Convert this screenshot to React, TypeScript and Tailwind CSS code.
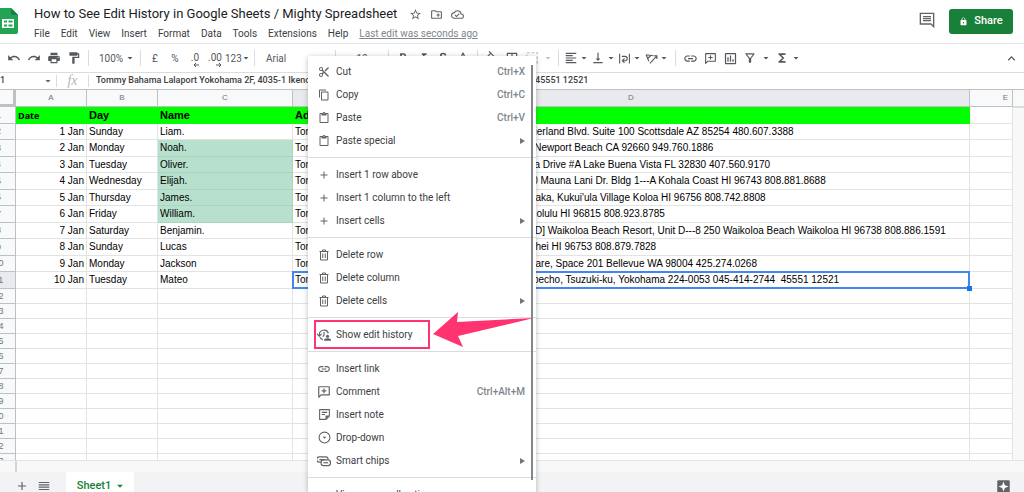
import type { ReactNode } from 'react';
import {
  MdAdd,
  MdArrowDropDown,
  MdContentCopy,
  MdContentCut,
  MdContentPaste,
  MdExpandLess,
  MdFormatAlignLeft,
  MdFormatBold,
  MdFormatColorFill,
  MdFormatColorText,
  MdFormatItalic,
  MdFormatPaint,
  MdFunctions,
  MdLink,
  MdLock,
  MdOutlineBorderAll,
  MdOutlineCloudDone,
  MdOutlineCreateNewFolder,
  MdOutlineFilterAlt,
  MdOutlineInsertChart,
  MdPrint,
  MdRedo,
  MdReorder,
  MdStarBorder,
  MdStrikethroughS,
  MdUndo,
  MdVerticalAlignBottom,
} from 'react-icons/md';

const FORMULA =
  'Tommy Bahama Lalaport Yokohama 2F, 4035-1 Ikenobecho, Tsuzuki-ku, Yokohama 224-0053 045-414-2744  45551 12521';

interface Row {
  date: string;
  day: string;
  name: string;
  address: string;
  shaded?: boolean;
}

const rows: Row[] = [
  { date: '1 Jan', day: 'Sunday', name: 'Liam.', address: 'Tommy Bahama Kierland Commons Store 15205 N. Kierland Blvd. Suite 100 Scottsdale AZ 85254 480.607.3388' },
  { date: '2 Jan', day: 'Monday', name: 'Noah.', address: 'Tommy Bahama Fashion Island 854 Avocado Avenue Newport Beach CA 92660 949.760.1886', shaded: true },
  { date: '3 Jan', day: 'Tuesday', name: 'Oliver.', address: 'Tommy Bahama Disney Springs Mall 1502 Buena Vista Drive #A Lake Buena Vista FL 32830 407.560.9170', shaded: true },
  { date: '4 Jan', day: 'Wednesday', name: 'Elijah.', address: 'Tommy Bahama The Shoppes at Mauna Lani, 68-1330 Mauna Lani Dr. Bldg 1---A Kohala Coast HI 96743 808.881.8688', shaded: true },
  { date: '5 Jan', day: 'Thursday', name: 'James.', address: "Tommy Bahama Kukui'ula Koloa 2829 Ala Kalanikaumaka, Kukui'ula Village Koloa HI 96756 808.742.8808", shaded: true },
  { date: '6 Jan', day: 'Friday', name: 'William.', address: 'Tommy Bahama Waikiki 298 Beach Walk Avenue, Honolulu HI 96815 808.923.8785', shaded: true },
  { date: '7 Jan', day: 'Saturday', name: 'Benjamin.', address: "Tommy Bahama Kings' Shops at Waikoloa, [Building #D] Waikoloa Beach Resort, Unit D---8 250 Waikoloa Beach Waikoloa HI 96738 808.886.1591" },
  { date: '8 Jan', day: 'Sunday', name: 'Lucas', address: 'Tommy Bahama Wailea 3750 Wailea Alanui Drive S Kihei HI 96753 808.879.7828' },
  { date: '9 Jan', day: 'Monday', name: 'Jackson', address: 'Tommy Bahama Bellevue Collection 211 Bellevue Square, Space 201 Bellevue WA 98004 425.274.0268' },
  { date: '10 Jan', day: 'Tuesday', name: 'Mateo', address: FORMULA },
];

const emptyRows = [12, 13, 14, 15, 16, 17, 18, 19, 20, 21, 22, 23];

function CommentPlusIcon({ className = 'size-[14px]' }: { className?: string }) {
  return (
    <svg viewBox="0 0 24 24" fill="none" stroke="currentColor" strokeWidth="2" className={className}>
      <path d="M3 21V3h18v14H7z" strokeLinejoin="round" />
      <path d="M12 6v8M8 10h8" />
    </svg>
  );
}

function HistoryIcon() {
  return (
    <svg viewBox="0 0 24 24" fill="none" stroke="currentColor" strokeWidth="2" className="size-[14px]">
      <path d="M4 12a8 8 0 0 1 15.500-3M5 16a8 8 0 0 0 5 4" />
      <path d="M0 10l4 4 4-4M12 7v5l-2 3" />
      <circle cx="18" cy="14" r="2.600" fill="currentColor" stroke="none" />
      <path d="M12 22v-1.500c0-2 3-3 6-3s6 1 6 3V22z" fill="currentColor" stroke="none" />
    </svg>
  );
}

function NoteIcon() {
  return (
    <svg viewBox="0 0 24 24" fill="none" stroke="currentColor" strokeWidth="2" className="size-[13px]">
      <path d="M3 3h18v12l-6 6H3z" strokeLinejoin="round" />
      <path d="M7 8h10M7 12h6" />
      <path d="M21 14h-7v7z" fill="currentColor" stroke="none" />
    </svg>
  );
}

function DropDownIcon() {
  return (
    <svg viewBox="0 0 24 24" fill="none" stroke="currentColor" strokeWidth="2" className="size-[13px]">
      <circle cx="12" cy="12" r="10" />
      <path d="M8.500 10.500h7L12 14.500z" fill="currentColor" stroke="none" />
    </svg>
  );
}

function ChipsIcon() {
  return (
    <svg viewBox="0 0 24 24" fill="none" stroke="currentColor" strokeWidth="2" className="size-[14px]">
      <path d="M7 14H4a4 4 0 0 1 0-9h11a4 4 0 0 1 4 4M4 9.500h9" />
      <rect x="7" y="10" width="16" height="10" rx="4" />
      <path d="M11 15h8" />
    </svg>
  );
}

function TrashIcon() {
  return (
    <svg viewBox="0 0 24 24" fill="none" stroke="currentColor" strokeWidth="2" className="size-3">
      <path d="M3 5h18M9 4V2h6v2M5 5v17h14V5M9.500 9v9M14.500 9v9" />
    </svg>
  );
}

function WrapIcon() {
  return (
    <svg viewBox="0 0 24 24" fill="none" stroke="currentColor" strokeWidth="2" className="size-[13px]">
      <path d="M3 3v18M21 3v18M7 8h6a4 4 0 0 1 0 8H9M12 12l-4 4 4 4" />
    </svg>
  );
}

function RotateIcon() {
  return (
    <svg viewBox="0 0 24 24" fill="none" stroke="currentColor" strokeWidth="2" className="size-[13px]">
      <path d="M2 5l13 2M2 5l5 12M11 6l-6 6M9 21L21 8M16 7h6v6" />
    </svg>
  );
}

function ExploreIcon() {
  return (
    <svg viewBox="0 0 24 24" className="size-[15px]">
      <path d="M2 4a2 2 0 0 1 2-2h16a2 2 0 0 1 2 2v18H4a2 2 0 0 1-2-2z" fill="#5f6368" />
      <path d="M12 4l2.200 5.800L20 12l-5.800 2.200L12 20l-2.200-5.800L4 12l5.800-2.200z" fill="#fff" />
    </svg>
  );
}

function SheetsLogo() {
  return (
    <svg viewBox="0 0 22 26" className="h-[26px] w-[22px]">
      <path d="M2 0h13l7 7v17a2 2 0 0 1-2 2H2a2 2 0 0 1-2-2V2a2 2 0 0 1 2-2z" fill="#23a455" />
      <path d="M15 0l7 7h-5a2 2 0 0 1-2-2z" fill="#158043" />
      <path d="M6 11h12v9H6zM8 12.500v2h3v-2zM12.500 12.500v2h4v-2zM8 16.500v2h3v-2zM12.500 16.500v2h4v-2z" fill="#fff" fillRule="evenodd" />
    </svg>
  );
}

function Separator() {
  return <div className="mx-1 h-4 w-px shrink-0 bg-[#dadce0]" />;
}

function Tool({ label, children, className = 'w-5' }: { label: string; children?: ReactNode; className?: string }) {
  return (
    <button aria-label={label} className={`flex h-5 shrink-0 items-center justify-center ${className}`}>
      {children}
    </button>
  );
}

function DropTool({ label, children }: { label: string; children: ReactNode }) {
  return (
    <button aria-label={label} className="flex h-5 w-[27px] shrink-0 items-center justify-start pl-px">
      {children}
      <MdArrowDropDown className="size-3" />
    </button>
  );
}

function DecimalTool({ label, digits, arrow }: { label: string; digits: string; arrow: string }) {
  return (
    <Tool label={label}>
      <span className="flex flex-col items-end pt-1 text-[10px] leading-[10px]">
        {digits}
        <svg viewBox="0 0 6 4" fill="none" stroke="currentColor" className="h-1 w-1.5">
          <path d={arrow} />
        </svg>
      </span>
    </Tool>
  );
}

function Toolbar() {
  return (
    <div className="flex h-[29px] shrink-0 items-center border-b border-[#dadce0] pl-[22px] pr-[5px] text-[10px] text-[#55595e]">
      <Tool label="Undo"><MdUndo className="size-[14px]" /></Tool>
      <Tool label="Redo"><MdRedo className="size-[14px]" /></Tool>
      <Tool label="Print"><MdPrint className="size-[14px]" /></Tool>
      <Tool label="Paint format"><MdFormatPaint className="size-[14px]" /></Tool>
      <Separator />
      <button className="flex w-[43px] shrink-0 items-center justify-between pl-1.5">
        100%
        <MdArrowDropDown className="size-3" />
      </button>
      <Separator />
      <Tool label="Pounds">£</Tool>
      <Tool label="Per cent">%</Tool>
      <DecimalTool label="Decrease decimal places" digits=".0" arrow="M6 2H1M3 0L1 2l2 2" />
      <DecimalTool label="Increase decimal places" digits=".00" arrow="M0 2h5M3 0l2 2-2 2" />
      <button className="flex w-[25px] shrink-0 items-center">
        123
        <MdArrowDropDown className="-ml-0.5 size-3 shrink-0" />
      </button>
      <Separator />
      <button className="flex w-[72px] shrink-0 items-center px-[7px]">Arial</button>
      <Separator />
      <button className="w-[44px] shrink-0">10</button>
      <Separator />
      <Tool label="Bold"><MdFormatBold className="size-[14px]" /></Tool>
      <Tool label="Italic"><MdFormatItalic className="size-[14px]" /></Tool>
      <Tool label="Strikethrough"><MdStrikethroughS className="size-[14px]" /></Tool>
      <Tool label="Text colour"><MdFormatColorText className="size-[14px]" /></Tool>
      <Separator />
      <Tool label="Fill colour"><MdFormatColorFill className="size-[14px]" /></Tool>
      <Tool label="Borders"><MdOutlineBorderAll className="size-[14px]" /></Tool>
      <Tool label="Merge cells">
        <svg viewBox="0 0 24 24" fill="none" stroke="#bdc1c6" strokeWidth="2" className="size-[14px]">
          <path d="M3 3h18v18H3z" strokeDasharray="5 3" />
        </svg>
      </Tool>
      <Tool label="Merge type" className="w-3"><MdArrowDropDown className="size-3 text-[#bdc1c6]" /></Tool>
      <Separator />
      <DropTool label="Horizontal align"><MdFormatAlignLeft className="size-[14px]" /></DropTool>
      <DropTool label="Vertical align"><MdVerticalAlignBottom className="size-[14px]" /></DropTool>
      <DropTool label="Text wrapping"><WrapIcon /></DropTool>
      <DropTool label="Text rotation"><RotateIcon /></DropTool>
      <Separator />
      <Tool label="Insert link"><MdLink className="size-[15px]" /></Tool>
      <Tool label="Insert comment"><CommentPlusIcon className="size-[13px]" /></Tool>
      <Tool label="Insert chart"><MdOutlineInsertChart className="size-[15px]" /></Tool>
      <Tool label="Create a filter"><MdOutlineFilterAlt className="size-[14px]" /></Tool>
      <Tool label="Filter views" className="w-3"><MdArrowDropDown className="size-3" /></Tool>
      <Tool label="Functions"><MdFunctions className="size-[14px]" /></Tool>
      <Tool label="More functions" className="w-2"><MdArrowDropDown className="size-3 shrink-0" /></Tool>
      <button aria-label="Hide the menus" className="ml-auto"><MdExpandLess className="size-[15px]" /></button>
    </div>
  );
}

function Header() {
  const menus = ['File', 'Edit', 'View', 'Insert', 'Format', 'Data', 'Tools', 'Extensions', 'Help'];
  return (
    <header className="flex h-11 shrink-0 border-b border-[#e3e5e8] pl-[14px] pr-[11px]">
      <div className="mr-4 mt-2"><SheetsLogo /></div>
      <div className="pt-1">
        <div className="flex h-5 items-center text-[#5f6368]">
          <h1 className="mr-3 text-[13px] text-[#202124]">How to See Edit History in Google Sheets / Mighty Spreadsheet</h1>
          <div className="flex gap-2">
            <button aria-label="Star"><MdStarBorder className="size-[13px]" /></button>
            <button aria-label="Move"><MdOutlineCreateNewFolder className="size-[13px]" /></button>
            <button aria-label="Document status"><MdOutlineCloudDone className="size-[13px]" /></button>
          </div>
        </div>
        <nav className="flex h-[18px] items-center gap-[11px] text-[10px] text-[#3c4043]">
          {menus.map((m) => (
            <button key={m}>{m}</button>
          ))}
          <a href="#history" className="text-[#80868b] underline">Last edit was seconds ago</a>
        </nav>
      </div>
      <div className="ml-auto flex items-start pt-[9px]">
        <button aria-label="Open comment history" className="mr-[14px] mt-[3px] text-[#5f6368]">
          <svg viewBox="0 0 24 24" fill="none" stroke="currentColor" strokeWidth="2" className="size-4">
            <path d="M2 2h20v20l-4-4H2zM6 7h12M6 10h12M6 13h12" />
          </svg>
        </button>
        <button className="flex h-[25px] w-16 items-center justify-center gap-1.5 rounded-[3px] bg-[#188038] text-[11px] font-medium text-white">
          <MdLock className="size-[9px]" />
          Share
        </button>
      </div>
    </header>
  );
}

function FormulaBar() {
  return (
    <div className="flex h-4 shrink-0 items-center text-[9px] font-medium text-[#3c4043]">
      <input aria-label="Name box" defaultValue="D11" className="w-[60px] pl-[7px] outline-none" />
      <MdArrowDropDown className="size-3 text-[#5f6368]" />
      <div className="ml-0.5 h-3 w-px bg-[#dadce0]" />
      <span className="w-[31px] text-center font-['Liberation_Serif',serif] text-[14px] font-normal italic leading-none text-[#b4b7bb]">fx</span>
      <div className="h-3 w-px bg-[#dadce0]" />
      <input aria-label="Formula" defaultValue={FORMULA} className="min-w-0 flex-1 pl-[7px] outline-none" />
    </div>
  );
}

const cell = 'overflow-hidden whitespace-pre border-b border-r border-[#e2e3e3] p-0 align-middle leading-none';
const rowHead = 'border-b border-r border-[#c0c0c0] bg-[#f8f9fa] p-0 text-center text-[9px] font-normal leading-none text-[#70757a]';
const titleCell = 'bg-[#00ff00] p-0 pl-0.5 text-left font-bold leading-none';

function Grid() {
  return (
    <div className="flex min-h-0 flex-1 border-t border-[#c0c0c0]">
      <div className="min-w-0 flex-1 overflow-hidden">
        <table className="w-full table-fixed border-separate border-spacing-0 font-['Liberation_Sans',Arial,sans-serif] text-[10px] text-black">
          <colgroup>
            <col className="w-[34px]" />
            <col className="w-[71px]" />
            <col className="w-[71px]" />
            <col className="w-[135px]" />
            <col />
            <col className="w-[43px]" />
          </colgroup>
          <thead>
            <tr className="h-[17px] text-[8px] leading-none text-[#70757a] *:border-b *:border-r *:border-[#c0c0c0] *:bg-[#f8f9fa] *:p-0 *:font-normal">
              <th className="shadow-[inset_-2px_-2px_0_#c0c0c0]" />
              <th>A</th>
              <th>B</th>
              <th>C</th>
              <th className="bg-[#e8eaed]!">D</th>
              <th className="pr-1! text-right">E</th>
            </tr>
          </thead>
          <tbody>
            <tr className="h-[17px]">
              <th className={rowHead}>1</th>
              <td className={`${titleCell} font-['Open_Sans',sans-serif] text-[9px]`}>Date</td>
              <td className={`${titleCell} text-[11px]`}>Day</td>
              <td className={`${titleCell} text-[11px]`}>Name</td>
              <td className={`${titleCell} text-[11px]`}>Address</td>
              <td className={cell} />
            </tr>
            {rows.map((r, i) => {
              const selected = i === rows.length - 1;
              return (
                <tr key={r.date} className="odd:h-[17px] even:h-4">
                  <th className={`${rowHead} ${selected ? 'bg-[#e8eaed]!' : ''}`}>{i + 2}</th>
                  <td className={`${cell} pr-0.5! text-right`}>{r.date}</td>
                  <td className={`${cell} pl-0.5!`}>{r.day}</td>
                  <td className={`${cell} pl-0.5! ${r.shaded ? 'border-[#a9d5c0]! bg-[#b7e1cd]' : ''}`}>{r.name}</td>
                  <td className={`${cell} pl-0.5! ${selected ? 'relative overflow-visible!' : ''}`}>
                    {r.address}
                    {selected && (
                      <>
                        <span className="absolute -inset-px border-2 border-[#4285f4]" />
                        <span className="absolute -bottom-[3px] -right-[3px] size-[5px] bg-[#1a73e8]" />
                      </>
                    )}
                  </td>
                  <td className={cell} />
                </tr>
              );
            })}
            {emptyRows.map((n) => (
              <tr key={n} className="h-[15px]">
                <th className={rowHead}>{n}</th>
                <td className={cell} />
                <td className={cell} />
                <td className={cell} />
                <td className={cell} />
                <td className={cell} />
              </tr>
            ))}
          </tbody>
        </table>
      </div>
      <div className="w-[11px] shrink-0 bg-[#f8f8f8]">
        <div className="h-[18px] border-b-2 border-[#dcdcdc] bg-[#f8f9fa]" />
      </div>
    </div>
  );
}

function SheetTabs() {
  return (
    <footer className="h-8 shrink-0 overflow-hidden border-t border-[#e2e3e3] bg-[#f8f8f8]">
      <div className="h-[11px] w-[35px] border-r-2 border-[#d5d5d5]" />
      <div className="flex h-7 items-center bg-[#f1f3f4] pl-[33px] pr-[13px] text-[#5f6368]">
        <button aria-label="Add sheet"><MdAdd className="size-[14px]" /></button>
        <button aria-label="All sheets" className="ml-2"><MdReorder className="size-[14px]" /></button>
        <button className="ml-[15px] flex h-full w-[68px] items-center justify-center gap-0.5 bg-white pl-1 text-[11px] font-medium text-[#188038]">
          Sheet1
          <MdArrowDropDown className="size-[14px]" />
        </button>
        <button aria-label="Explore" className="ml-auto"><ExploreIcon /></button>
      </div>
    </footer>
  );
}

interface MenuEntry {
  label: string;
  icon: ReactNode;
  shortcut?: string;
  submenu?: boolean;
  marked?: boolean;
}

const iconSize = 'size-3';

const menuGroups: MenuEntry[][] = [
  [
    { label: 'Cut', icon: <MdContentCut className={iconSize} />, shortcut: 'Ctrl+X' },
    { label: 'Copy', icon: <MdContentCopy className={iconSize} />, shortcut: 'Ctrl+C' },
    { label: 'Paste', icon: <MdContentPaste className={iconSize} />, shortcut: 'Ctrl+V' },
    { label: 'Paste special', icon: <MdContentPaste className={iconSize} />, submenu: true },
  ],
  [
    { label: 'Insert 1 row above', icon: <MdAdd className={iconSize} /> },
    { label: 'Insert 1 column to the left', icon: <MdAdd className={iconSize} /> },
    { label: 'Insert cells', icon: <MdAdd className={iconSize} />, submenu: true },
  ],
  [
    { label: 'Delete row', icon: <TrashIcon /> },
    { label: 'Delete column', icon: <TrashIcon /> },
    { label: 'Delete cells', icon: <TrashIcon />, submenu: true },
  ],
  [{ label: 'Show edit history', icon: <HistoryIcon />, marked: true }],
  [
    { label: 'Insert link', icon: <MdLink className="size-[14px]" /> },
    { label: 'Comment', icon: <CommentPlusIcon />, shortcut: 'Ctrl+Alt+M' },
    { label: 'Insert note', icon: <NoteIcon /> },
    { label: 'Drop-down', icon: <DropDownIcon /> },
    { label: 'Smart chips', icon: <ChipsIcon />, submenu: true },
  ],
  [{ label: 'View more cell actions', icon: <MdExpandLess className={iconSize} /> }],
];

function ContextMenu() {
  return (
    <div
      role="menu"
      className="absolute left-[326px] top-14 w-[228px] bg-white pt-1 shadow-[0_1px_5px_rgba(60,64,67,0.35)]"
    >
      {menuGroups.map((group, g) => (
        <div key={group[0].label}>
          {g > 0 && <div className="my-[5px] h-px bg-[#dadce0]" />}
          {group.map((item) => (
            <button
              key={item.label}
              role="menuitem"
              className="relative flex h-[23px] w-full items-center pl-[9px] pr-[11px] text-[10px] text-[#3c4043]"
            >
              <span className="mr-[5px] flex w-[14px] justify-center text-[#5f6368]">{item.icon}</span>
              {item.label}
              {item.shortcut && <span className="ml-auto font-medium text-[#80868b]">{item.shortcut}</span>}
              {item.submenu && (
                <svg viewBox="0 0 5 6" className="ml-auto h-1.5 w-[5px]">
                  <path d="M0 0l5 3-5 3z" fill="#70757a" />
                </svg>
              )}
              {item.marked && (
                <>
                  <span className="absolute -inset-y-[3px] left-1.5 w-[116px] border-2 border-[#ff3370]" />
                  <svg viewBox="0 0 101 35" className="absolute left-[125px] top-[-11px] h-[35px] w-[101px]">
                    <path d="M0 22L25 0L24 10L101 6L25 24L30 35Z" fill="#ff3370" />
                  </svg>
                </>
              )}
            </button>
          ))}
        </div>
      ))}
      <div className="absolute right-[3px] top-[9px] h-[415px] w-0.5 bg-[#80868b]" />
    </div>
  );
}

export default function App() {
  return (
    <div className="h-screen overflow-hidden bg-white font-[Roboto,sans-serif]">
      {/* left edge of the sheet runs past the window */}
      <div className="relative -ml-[18px] flex h-full flex-col">
        <Header />
        <Toolbar />
        <FormulaBar />
        <Grid />
        <SheetTabs />
        <ContextMenu />
      </div>
    </div>
  );
}
